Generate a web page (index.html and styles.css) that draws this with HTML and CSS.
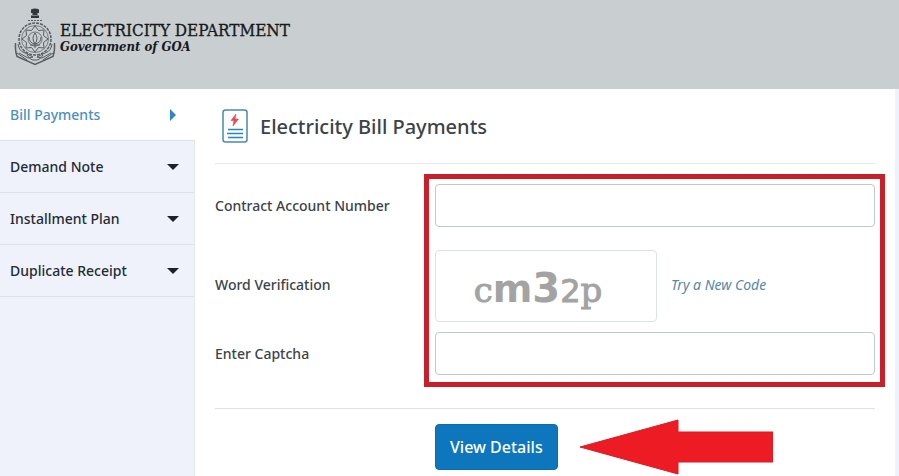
FILE: index.html
```html
<!DOCTYPE html>
<html lang="en">
<head>
  <meta charset="utf-8">
  <title>Electricity Bill Payments</title>
  <link rel="stylesheet" href="styles.css">
</head>
<body>
  <header class="site-header">
    <svg class="emblem" viewBox="0 0 42 58" aria-hidden="true">
      <g fill="#31373b">
        <path d="M17 1.500Q21 -.5 25 1.500V5H17Z"/>
        <path d="M18.500 5h5v2h-5zM17 7.500h8v2.500h-8z"/>
      </g>
      <g fill="none" stroke="#565c60" stroke-width="1">
        <path d="M14 12.500h14" stroke-dasharray="2 1"/>
        <circle cx="21" cy="31" r="16" stroke-width="1.500" stroke-dasharray="3 1"/>
        <circle cx="21" cy="31" r="13.500" stroke-width=".7"/>
        <path d="M21 18l3.500 4.500 5.500-.5-.5 5.500L34 31l-4.500 3.500.5 5.500-5.500-.5L21 44l-3.500-4.500-5.500.5.500-5.500L8 31l4.500-3.500-.5-5.500 5.500.5Z"/>
        <circle cx="21" cy="31" r="7" stroke-width=".8"/>
        <path d="M21 25q-4 5 0 11q4-6 0-11M15 29q0 6 6 7q6-1 6-7M16 37h10M21 36v4"/>
        <path d="M1.500 35Q1 43 3 48.500L21 56.500L39 48.500Q41 43 40.500 35" stroke-width="1.400"/>
        <path d="M4 36q1 7 6 8.500l9 4.500-5 1-9-5M38 36q-1 7-6 8.500l-9 4.500 5 1 9-5M3 45l10 7M39 45l-10 7M13 47q4 6 8 5q4 1 8-5"/>
      </g>
    </svg>
    <div class="brand">
      <div class="brand-name">ELECTRICITY DEPARTMENT</div>
      <div class="brand-sub">Government of GOA</div>
    </div>
  </header>

  <div class="layout">
    <nav class="sidebar">
      <a class="nav-item active" href="#">Bill Payments
        <svg class="caret-right" viewBox="0 0 6 12" aria-hidden="true"><path d="M0 0L6 6L0 12Z"/></svg></a>
      <a class="nav-item" href="#">Demand Note
        <svg class="caret" viewBox="0 0 12 6" aria-hidden="true"><path d="M0 0H12L6 6Z"/></svg></a>
      <a class="nav-item" href="#">Installment Plan
        <svg class="caret" viewBox="0 0 12 6" aria-hidden="true"><path d="M0 0H12L6 6Z"/></svg></a>
      <a class="nav-item" href="#">Duplicate Receipt
        <svg class="caret" viewBox="0 0 12 6" aria-hidden="true"><path d="M0 0H12L6 6Z"/></svg></a>
    </nav>

    <main class="content">
      <div class="page-title">
        <svg class="bill-icon" viewBox="0 0 26 34" aria-hidden="true">
          <rect x="1" y="1" width="24" height="32" rx="2.500" fill="#fdfeff" stroke="#4b89ad" stroke-width="1.500"/>
          <path d="M14 5L9 11.500H12L11 17L16.500 10H13Z" fill="#e64a50" stroke="#e64a50" stroke-width=".6"/>
          <path d="M6 20.500H21M5 24.500H21M6 28.500H21" stroke="#2f84bd" stroke-width="1.500"/>
        </svg>
        <h1>Electricity Bill Payments</h1>
      </div>

      <form>
        <div class="fields">
          <label class="label-account" for="account">Contract Account Number</label>
          <input class="input-account" id="account" type="text">
          <div class="label-word">Word Verification</div>
          <div class="verification">
            <div class="captcha"><span class="slab">c</span><span class="heavy">m</span><span class="heavy tall">3</span><span class="plain">2</span><span class="slab">p</span></div>
            <a class="new-code" href="#">Try a New Code</a>
          </div>
          <label class="label-captcha" for="captcha">Enter Captcha</label>
          <input class="input-captcha" id="captcha" type="text">
          <div class="highlight"></div>
        </div>
        <div class="actions">
          <button type="submit">View Details</button>
          <svg class="arrow" viewBox="0 0 194 56" aria-hidden="true"><path d="M1 28L99 1V13H194V43H99V55Z" fill="#ed1c24" stroke="#d51c24" stroke-width="1"/></svg>
        </div>
      </form>
    </main>
  </div>
</body>
</html>
```
FILE: styles.css
```css
* {
  box-sizing: border-box;
}

body {
  margin: 0;
  min-height: 100vh;
  display: flex;
  flex-direction: column;
  background: #eff2fb;
  color: #3b4349;
  font-family: "Noto Sans", "Open Sans", sans-serif;
  font-size: 14px;
  font-weight: 500;
}

.site-header {
  display: flex;
  align-items: flex-start;
  gap: 4px;
  min-height: 89px;
  padding: 8px 14px;
  background: #c9ced1;
  color: #16191c;
  font-family: "DejaVu Serif Condensed", "DejaVu Serif", serif;
}

.emblem {
  width: 42px;
  height: 58px;
}

.brand {
  padding-top: 14px;
}

.brand-name {
  font-size: 17px;
  font-weight: 400;
  line-height: 17px;
  -webkit-text-stroke: 0.3px;
}

.brand-sub {
  font-size: 13px;
  font-style: italic;
  font-weight: 700;
  line-height: 16px;
}

.layout {
  flex: 1;
  display: flex;
  padding-right: 4px;
}

.sidebar {
  width: 195px;
  border-right: 1px solid #e1e6ef;
}

.nav-item {
  display: flex;
  align-items: center;
  justify-content: space-between;
  height: 52px;
  padding: 0 15px 0 10px;
  border-bottom: 1px solid #dde1e9;
  color: #252a35;
  text-decoration: none;
}

.nav-item.active {
  margin-right: -1px;
  padding-right: 19px;
  background: #fff;
  color: #4a91bd;
}

.caret {
  width: 12px;
  height: 6px;
  fill: #1c222d;
}

.caret-right {
  width: 6px;
  height: 12px;
  fill: #2f86c5;
}

.content {
  flex: 1;
  padding: 0 20px;
  background: #fff;
}

.page-title {
  display: flex;
  align-items: center;
  gap: 12px;
  height: 75px;
  padding-left: 7px;
  border-bottom: 1px solid #e6e9ea;
}

.bill-icon {
  width: 26px;
  height: 34px;
}

h1 {
  margin: 0;
  font-size: 20px;
  font-weight: 500;
}

.fields {
  display: grid;
  grid-template-columns: 220px 1fr;
  row-gap: 10px;
  align-items: center;
  padding: 20px 0 33px;
  border-bottom: 1px solid #dfe2e4;
}

.label-account,
.label-word,
.label-captcha {
  grid-column: 1;
}

.input-account,
.verification,
.input-captcha {
  grid-column: 2;
}

.label-account,
.input-account {
  grid-row: 1;
}

.label-word,
.verification {
  grid-row: 2;
  margin-top: 13px;
}

.label-word,
.new-code {
  padding-bottom: 3px;
}

.label-captcha,
.input-captcha {
  grid-row: 3;
}

input {
  width: 100%;
  height: 43px;
  padding: 0 12px;
  border: 1px solid #bccace;
  border-radius: 4px;
  background: #fff;
  font: inherit;
}

.verification {
  display: flex;
  align-items: center;
  gap: 14px;
}

.captcha {
  display: flex;
  align-items: baseline;
  justify-content: center;
  width: 222px;
  height: 72px;
  padding: 13px 16px 0 0;
  border: 1px solid #dde2e4;
  border-radius: 4px;
  color: #a3a3a3;
  line-height: 48px;
}

.slab {
  font-family: "DejaVu Serif", serif;
  font-size: 34px;
  font-weight: 400;
  -webkit-text-stroke: 1px;
}

.heavy {
  font-family: "DejaVu Sans", sans-serif;
  font-size: 38px;
  font-weight: 700;
}

.tall {
  font-size: 40px;
}

.plain {
  font-family: "DejaVu Sans", sans-serif;
  font-size: 32px;
  -webkit-text-stroke: 1px;
}

.new-code {
  color: #5488a8;
  font-size: 14px;
  font-style: italic;
  font-weight: 400;
  text-decoration: none;
}

.highlight {
  grid-column: 2;
  grid-row: 1 / 4;
  align-self: stretch;
  margin: -10px -10px -12px -11px;
  border: 5px solid #c8202b;
  pointer-events: none;
}

.actions {
  display: flex;
  align-items: center;
  gap: 21px;
  padding: 10px 0 0 220px;
}

button {
  height: 46px;
  padding: 0 14px;
  border: 1px solid #0d6cae;
  border-radius: 4px;
  background: #0e76bd;
  color: #fff;
  font: inherit;
  font-size: 16px;
}

.arrow {
  width: 194px;
  height: 56px;
}
```
